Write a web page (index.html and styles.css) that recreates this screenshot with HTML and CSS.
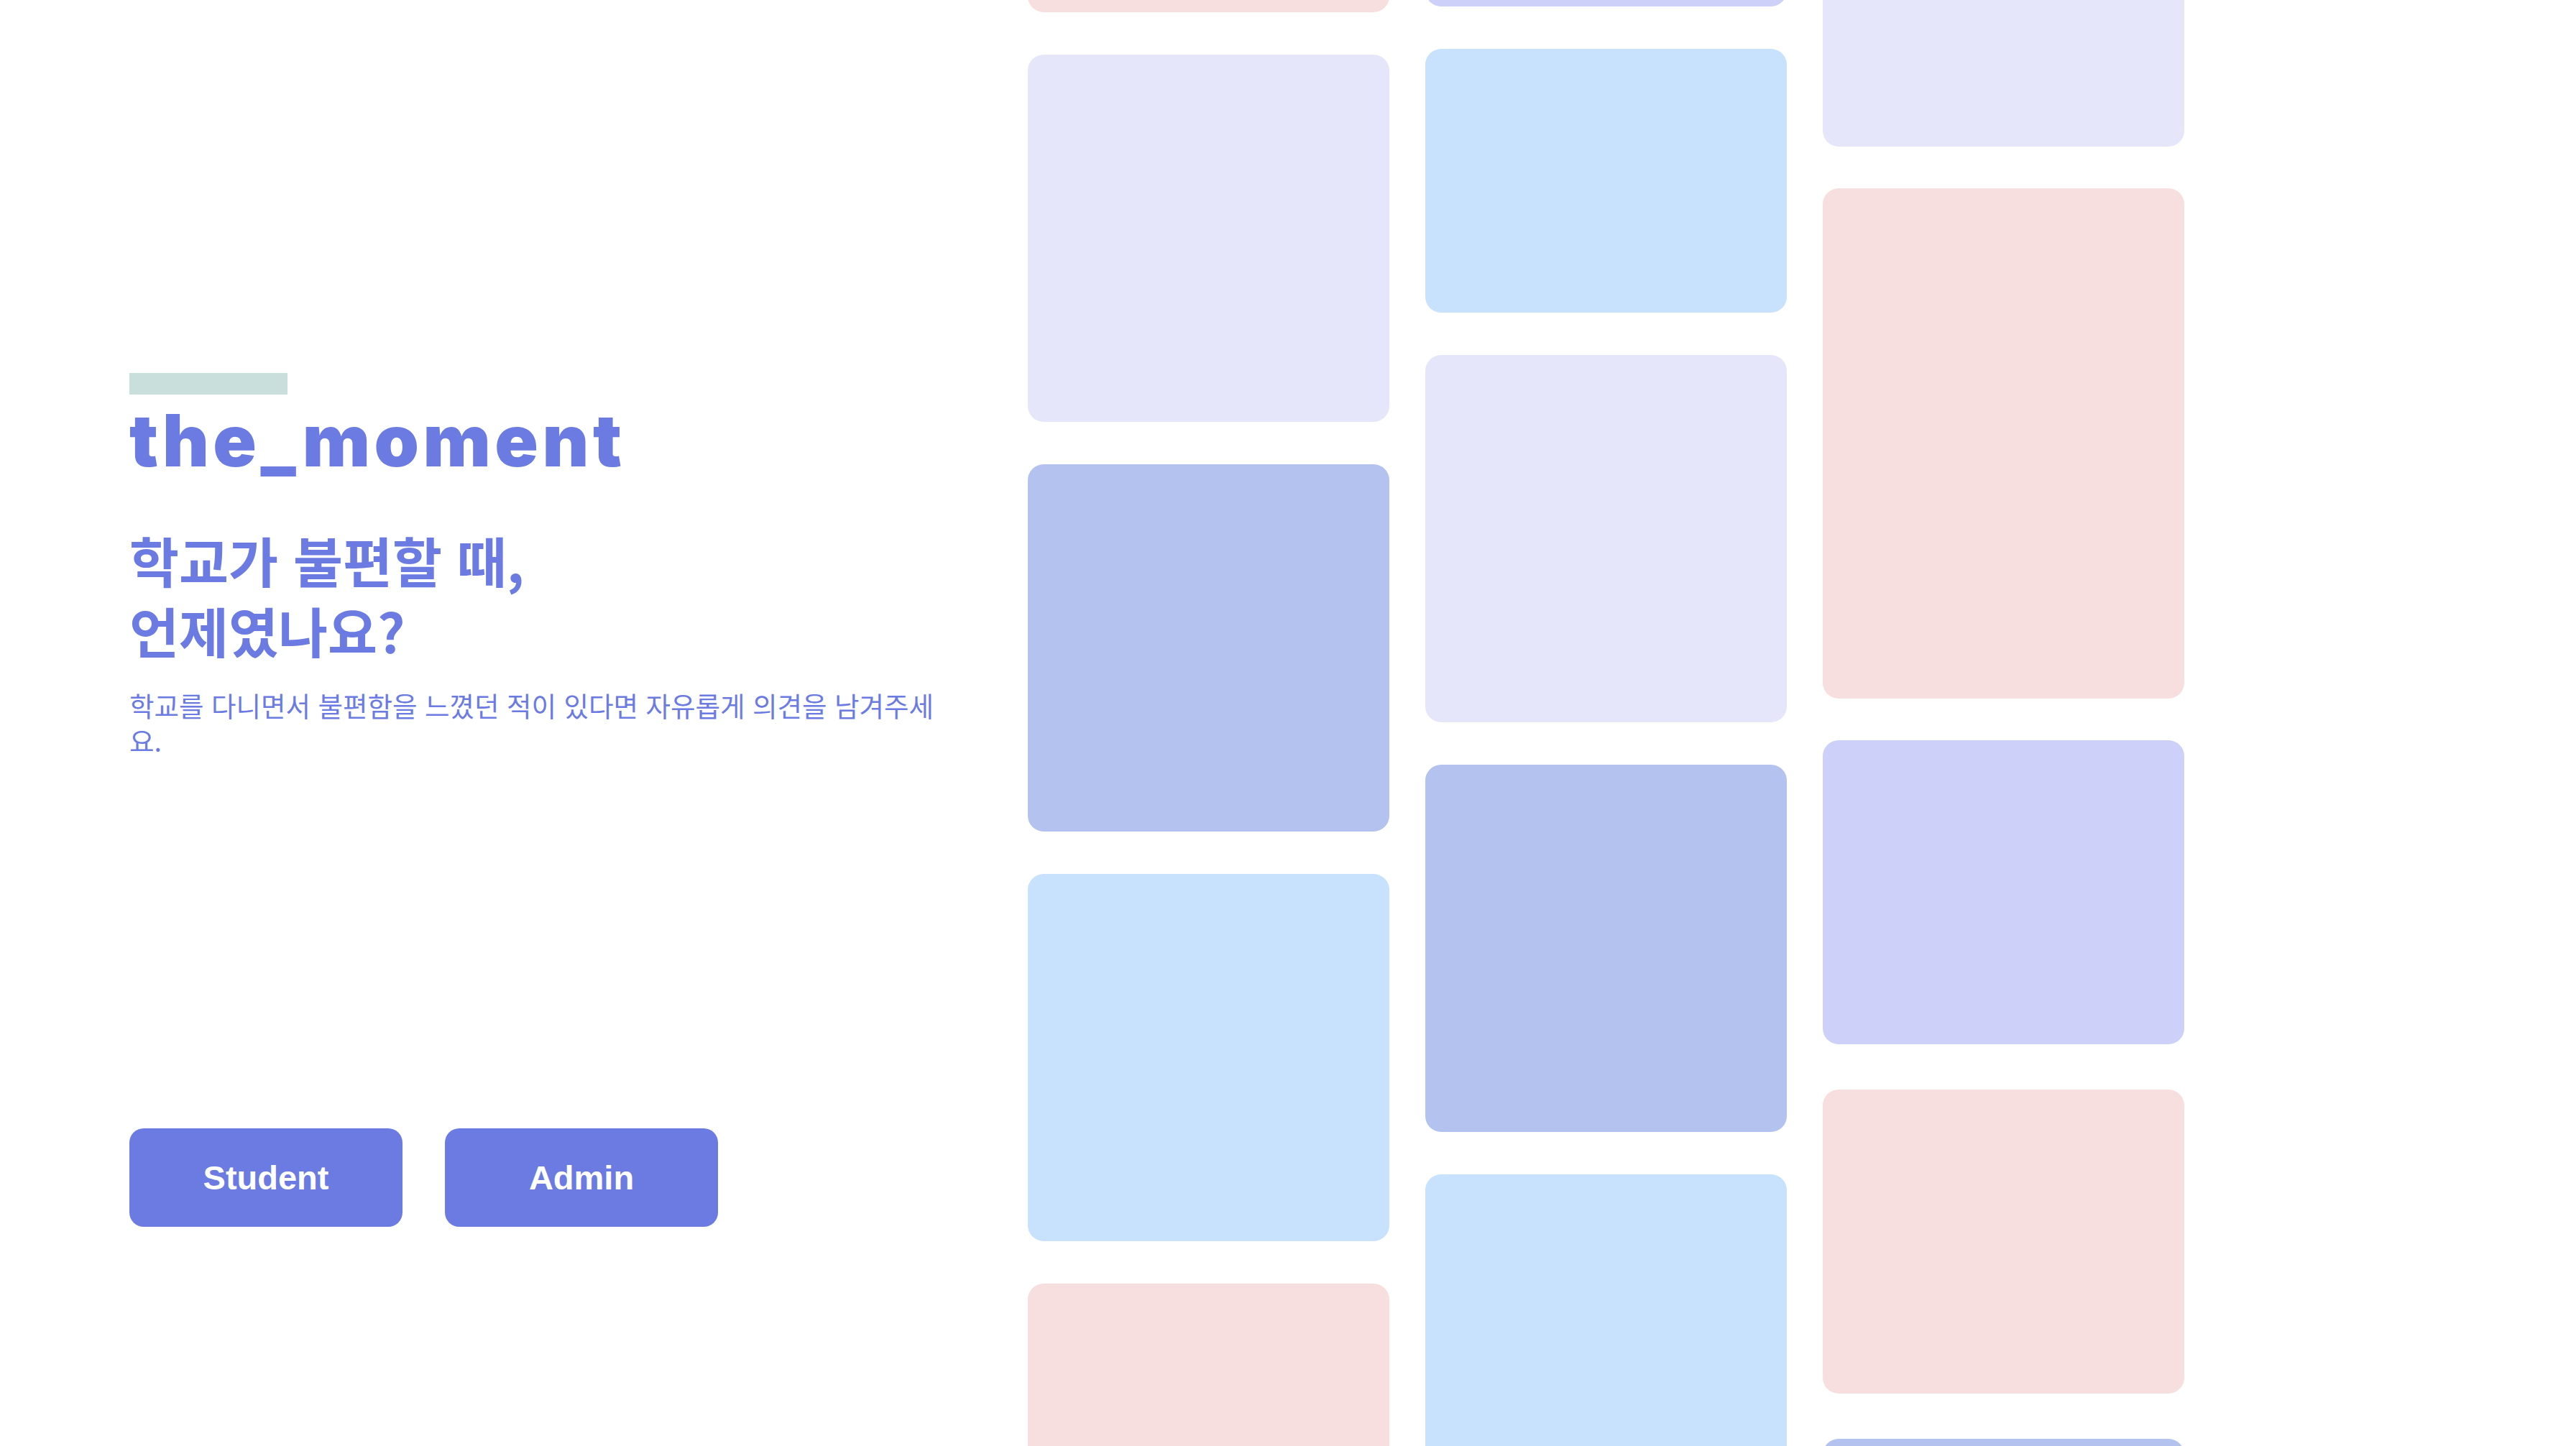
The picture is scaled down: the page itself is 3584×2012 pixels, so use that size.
FILE: index.html
```html
<!DOCTYPE html>
<html lang="ko">
<head>
<meta charset="utf-8">
<title>the_moment</title>
<link rel="stylesheet" href="styles.css">
</head>
<body>
<main class="page">
  <section class="intro">
    <div class="accent-bar"></div>
    <h1 class="logo">the_moment</h1>
    <h2 class="headline">학교가 불편할 때,<br>언제였나요?</h2>
    <p class="lead">학교를 다니면서 불편함을 느꼈던 적이 있다면 자유롭게 의견을 남겨주세요.</p>
    <div class="actions">
      <button class="btn">Student</button>
      <button class="btn">Admin</button>
    </div>
  </section>
  <section class="wall">
    <div class="col col-1">
      <div class="card pink h511"></div>
      <div class="card lavender h511"></div>
      <div class="card periwinkle h511"></div>
      <div class="card sky h511"></div>
      <div class="card pink h511"></div>
    </div>
    <div class="col col-2">
      <div class="card violet h423"></div>
      <div class="card sky h367"></div>
      <div class="card lavender h511"></div>
      <div class="card periwinkle h511"></div>
      <div class="card sky h511"></div>
    </div>
    <div class="col col-3">
      <div class="card lavender h423"></div>
      <div class="card pink h710"></div>
      <div class="card violet h423"></div>
      <div class="card pink h423 push"></div>
      <div class="card periwinkle h423 push"></div>
    </div>
  </section>
</main>
</body>
</html>
```

FILE: styles.css
```css
html, body {
  margin: 0;
  padding: 0;
  background: #ffffff;
  height: 100%;
  overflow: hidden;
}

.page {
  display: flex;
  width: 3584px;
  height: 2012px;
  overflow: hidden;
}

.intro {
  box-sizing: border-box;
  width: 1430px;
  flex: none;
  padding: 519px 0 0 180px;
  display: flex;
  flex-direction: column;
  align-items: flex-start;
  color: #6b7be2;
}

.accent-bar {
  width: 220px;
  height: 30px;
  background: #c9dfdb;
}

.logo {
  margin: 14px 0 0 0;
  font-family: "Inter", "Lato", sans-serif;
  font-weight: 900;
  font-size: 100px;
  line-height: 100px;
  letter-spacing: 5.5px;
  color: #6b7be2;
}

.headline {
  margin: 67px 0 0 0;
  font-family: "Noto Sans CJK KR", "Noto Sans", sans-serif;
  font-weight: 700;
  font-size: 75px;
  line-height: 98px;
  color: #6b7be2;
}

.lead {
  width: 1140px;
  margin: 30px 0 0 0;
  font-family: "Noto Sans CJK KR", "Noto Sans", sans-serif;
  font-weight: 400;
  font-size: 37.5px;
  line-height: 49px;
  color: #6b7be2;
}

.actions {
  margin-top: 516px;
  display: flex;
  gap: 59px;
}

.btn {
  width: 380px;
  height: 137px;
  border: none;
  border-radius: 20px;
  background: #6b7be2;
  color: #ffffff;
  font-family: "Liberation Sans", Arial, sans-serif;
  font-weight: 700;
  font-size: 47px;
  padding: 0;
  cursor: pointer;
}

.wall {
  display: flex;
  gap: 50px;
  align-items: flex-start;
  height: 2012px;
  overflow: hidden;
}

.col {
  width: 503px;
  display: flex;
  flex-direction: column;
  gap: 59px;
}

.col-1 { margin-top: -494px; }
.col-2 { margin-top: -414px; }
.col-3 { margin-top: -219px; gap: 58px; }

.card {
  border-radius: 22px;
  flex: none;
}

.push { margin-top: 5px; }

.h511 { height: 511px; }
.h423 { height: 423px; }
.h367 { height: 367px; }
.h710 { height: 710px; }

.pink { background: #f8dfdf; }
.lavender { background: #e6e6fa; }
.periwinkle { background: #b3c2ee; }
.sky { background: #c8e1fc; }
.violet { background: #cdd0f8; }
```
